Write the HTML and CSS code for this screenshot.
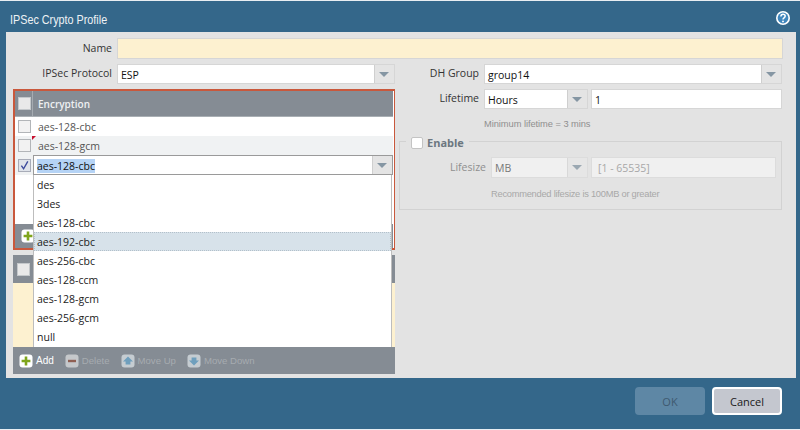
FILE: index.html
```html
<!DOCTYPE html>
<html lang="en">
<head>
<meta charset="utf-8">
<title>IPSec Crypto Profile</title>
<link rel="stylesheet" href="styles.css">
</head>
<body>
<div class="dialog">
  <header class="titlebar">
    <h1 class="title">IPSec Crypto Profile</h1>
    <svg class="help" viewBox="0 0 16 16" aria-label="Help"><circle cx="8" cy="8" r="7" fill="#fff"/><circle cx="8" cy="8" r="5.4" fill="#3f86bd"/><path d="M5.9 6.4c0-3 4.3-2.9 4.3-.3 0 1.7-2.2 1.7-2.2 3.3" fill="none" stroke="#fff" stroke-width="1.5"/><circle cx="8" cy="11.4" r=".95" fill="#fff"/></svg>
  </header>

  <main class="panel">
    <div class="name-row">
      <label class="label">Name</label>
      <div class="input required"></div>
    </div>

    <div class="columns">
      <section class="left">
        <div class="field-row">
          <label class="label">IPSec Protocol</label>
          <div class="select grow"><span class="value">ESP</span><span class="arrow"></span></div>
        </div>

        <div class="grid encryption">
          <div class="grid-head">
            <span class="check-cell"><span class="check head-check"></span></span>
            <span class="head-title">Encryption</span>
          </div>
          <div class="row"><span class="check-cell"><span class="check"></span></span><span class="cell">aes-128-cbc</span></div>
          <div class="row alt"><span class="check-cell"><span class="check"></span></span><span class="cell">aes-128-gcm</span><span class="dirty"></span></div>
          <div class="row edit">
            <span class="check-cell"><span class="check checked"><svg viewBox="0 0 12 12"><path d="M2.6 6.2 5 9.6 9.6 1.6" fill="none" stroke="#3b4a9c" stroke-width="1.5"/></svg></span></span>
            <div class="select editor"><span class="value"><span class="selection">aes-128-cbc</span></span><span class="arrow"></span></div>
          </div>
          <div class="grid-fill"></div>
          <div class="toolbar short">
            <svg class="tool" viewBox="0 0 14 14"><rect x=".5" y=".5" width="13" height="13" rx="3" fill="#fff"/><path d="M7 2.6v8.8M2.6 7h8.8" stroke="#7fa51c" stroke-width="2.6"/></svg>
          </div>
        </div>

        <div class="grid auth">
          <div class="grid-head tall"><span class="check-cell"><span class="check head-check"></span></span></div>
          <div class="grid-body"></div>
          <div class="toolbar">
            <span class="tool-item"><svg class="tool" viewBox="0 0 14 14"><rect x=".5" y=".5" width="13" height="13" rx="3" fill="#fff"/><path d="M7 2.6v8.8M2.6 7h8.8" stroke="#7fa51c" stroke-width="2.6"/></svg><span class="tool-label on">Add</span></span>
            <span class="tool-item"><svg class="tool" viewBox="0 0 14 14"><rect x=".5" y=".5" width="13" height="13" rx="3" fill="#c5c8cb"/><path d="M3 7h8" stroke="#8f5f52" stroke-width="2.4"/></svg><span class="tool-label">Delete</span></span>
            <span class="tool-item"><svg class="tool" viewBox="0 0 14 14"><rect x=".5" y=".5" width="13" height="13" rx="3" fill="#c5ccd1"/><path d="M7 2.6 12 7.6H9.4v3H4.6v-3H2z" fill="#6f9fbd"/></svg><span class="tool-label">Move Up</span></span>
            <span class="tool-item"><svg class="tool" viewBox="0 0 14 14"><rect x=".5" y=".5" width="13" height="13" rx="3" fill="#c5ccd1"/><path d="M7 11.4 12 6.4H9.4v-3H4.6v3H2z" fill="#6f9fbd"/></svg><span class="tool-label">Move Down</span></span>
          </div>
        </div>

        <ul class="dropdown">
          <li>des</li>
          <li>3des</li>
          <li>aes-128-cbc</li>
          <li class="hover">aes-192-cbc</li>
          <li>aes-256-cbc</li>
          <li>aes-128-ccm</li>
          <li>aes-128-gcm</li>
          <li>aes-256-gcm</li>
          <li>null</li>
        </ul>
      </section>

      <section class="right">
        <div class="field-row">
          <label class="label short-label">DH Group</label>
          <div class="select grow"><span class="value">group14</span><span class="arrow"></span></div>
        </div>
        <div class="field-row">
          <label class="label short-label">Lifetime</label>
          <div class="select unit"><span class="value">Hours</span><span class="arrow"></span></div>
          <div class="input number">1</div>
        </div>
        <p class="hint life-hint">Minimum lifetime = 3 mins</p>

        <div class="fieldset">
          <div class="legend"><span class="check legend-check"></span><span class="legend-text">Enable</span></div>
          <div class="field-row">
            <label class="label size-label">Lifesize</label>
            <div class="select unit size-unit disabled"><span class="value">MB</span><span class="arrow"></span></div>
            <div class="input number disabled placeholder">[1 - 65535]</div>
          </div>
          <p class="hint size-hint">Recommended lifesize is 100MB or greater</p>
        </div>
      </section>
    </div>
  </main>

  <footer class="actions">
    <button class="btn ok" type="button">OK</button>
    <button class="btn cancel" type="button">Cancel</button>
  </footer>
</div>
</body>
</html>
```

FILE: styles.css
```css
* { box-sizing: border-box; }
html, body { margin: 0; padding: 0; }
body {
  width: 800px;
  height: 430px;
  overflow: hidden;
  background: #e8eef2;
  font-family: "Open Sans", "Liberation Sans", sans-serif;
  font-size: 10.5px;
  color: #222;
}
.dialog { display: flex; flex-direction: column; height: 429px; border-top: 1px solid #e8eef2; background: #34678a; }

.titlebar { height: 31px; display: flex; align-items: center; justify-content: space-between; padding: 0 9px 0 10px; }
.title { margin: 0; font-family: "Liberation Sans", Arial, sans-serif; font-size: 13px; font-weight: 400; color: #eef2f5; position: relative; top: 3px; transform: scaleX(.83); transform-origin: left center; }
.help { width: 16px; height: 16px; position: relative; top: 1px; }

.panel { width: 790px; height: 346px; margin-left: 6px; background: #e3e3e3; padding: 6px 13px 0 7px; }
.name-row { display: flex; gap: 5px; height: 21px; }
.label { width: 99px; text-align: right; color: #333; line-height: 21px; flex: none; }
.field-row .label { line-height: 19px; }
.input { background: #fff; border: 1px solid #d6d6d6; line-height: 20px; padding-left: 3px; }
.required { flex: 1; background: #fdf1d0; }

.columns { display: flex; gap: 4px; margin-top: 5px; }
.left { width: 382px; position: relative; }
.right { width: 383px; }
.field-row { display: flex; gap: 5px; height: 20px; margin-bottom: 5px; }
.field-row .short-label { width: 80px; }

.select { display: flex; background: #fff; border: 1px solid #d6d6d6; height: 20px; }
.grow { flex: 1; }
.value { flex: 1; line-height: 20px; padding-left: 3px; color: #111; }
.arrow { width: 20px; flex: none; background: #e4e4e4; border-left: 1px solid #cfcfcf; position: relative; }
.arrow::after { content: ""; position: absolute; left: 4px; top: 7px; border: 5px solid transparent; border-top: 5px solid #8596a3; border-bottom: 0; }

.grid { width: 382px; }
.encryption { height: 161px; border: 2px solid #c9583c; border-width: 2px 1px 2px 2px; display: flex; flex-direction: column; background: #fff; padding-right: 1px; }
.grid-head { display: flex; height: 26px; background: #858c94; border-bottom: 1px solid #a9afb4; }
.check-cell { width: 18px; flex: none; display: flex; align-items: center; justify-content: center; }
.grid-head .check-cell { border-right: 1px solid #a5abb1; padding-left: 1px; }
.head-title { padding-left: 5px; line-height: 26px; color: #eef0f2; font-weight: 600; font-size: 10px; }
.check { width: 13px; height: 13px; display: block; border: 1px solid #b2b5b8; background: #f2f2f2; }
.head-check { background: #e9e9e9; border-color: #c4c8cb; width: 13px; height: 13px; }
.check svg { display: block; width: 11px; height: 11px; }
.checked { background: #dfe3ea; border-color: #a8acb8; }

.row { display: flex; height: 19px; position: relative; background: #fff; align-items: center; }
.row.alt { background: #f0f2f3; }
.cell { padding-left: 5px; color: #555; }
.dirty { position: absolute; left: 17px; top: 0; border-top: 4px solid #c8102e; border-right: 4px solid transparent; width: 0; height: 0; }
.row.edit { height: 20px; background: #f0f2f3; }
.editor { flex: 1; border-color: #9a9a9a; }
.editor .value { line-height: 21px; }
.selection { background: #b5d3f5; }
.grid-fill { flex: 1; background: #fff; }

.toolbar { background: #858c94; display: flex; align-items: center; padding-left: 6px; }
.toolbar.short { height: 24px; flex: none; }
.tool { width: 14px; height: 14px; flex: none; display: block; }

.auth { margin-top: 5px; height: 119px; display: flex; flex-direction: column; }
.grid-head.tall { height: 28px; border-bottom: 0; background: #858c94; }
.grid-head.tall .check-cell { width: 20px; border-right: 0; }
.grid-body { flex: 1; background: #fdf1d0; }
.auth .toolbar { height: 27px; gap: 11px; }
.tool-item { display: flex; align-items: center; gap: 3px; }
.tool-label { color: #a5abb0; font-family: "Liberation Sans", Arial, sans-serif; font-size: 9.6px; }
.tool-label.on { color: #fff; font-size: 10px; }

.dropdown { position: absolute; top: 111px; left: 20px; width: 359px; height: 172px; margin: 0; padding: 0; list-style: none; background: #fff; border: 1px solid #bdbdbd; border-top: 0; border-bottom: 0; }
.dropdown li { height: 19px; line-height: 21px; padding-left: 3px; color: #222; }
.dropdown li.hover { background: #d7e2ea; outline: 1px dotted #b3c0ca; outline-offset: -1px; }

.unit { width: 104px; flex: none; }
.number { flex: 1; height: 20px; margin-left: -2px; color: #111; }
.hint { color: #8f8f8f; font-family: "Liberation Sans", Arial, sans-serif; font-size: 9.3px; line-height: 14px; }
.life-hint { margin: 0 0 0 85px; height: 22px; padding-top: 3px; letter-spacing: -0.05px; }

.fieldset { position: relative; height: 69px; margin-top: 5px; border: 1px solid #d2d2d2; padding: 15px 5px 0 0; }
.legend { position: absolute; top: -6px; left: 6px; display: flex; align-items: center; gap: 4px; background: #e3e3e3; padding: 0 5px; height: 13px; }
.legend-check { width: 12px; height: 12px; background: #fff; border-color: #c4c4c4; border-radius: 2px; }
.legend-text { font-weight: 700; color: #6c7780; font-size: 11px; }
.fieldset .field-row { margin-bottom: 0; height: 21px; }
.fieldset .size-label { width: 86px; color: #8f8f8f; line-height: 21px; }
.size-unit { width: 97px; height: 21px; }
.disabled { background: #f0f0f0; border-color: #dcdcdc; }
.disabled .value { color: #777; }
.disabled .arrow { background: #e6e6e6; border-left-color: #d8d8d8; }
.disabled .arrow::after { border-top-color: #9ba8b2; }
.placeholder { color: #a8a8a8; height: 21px; padding-left: 6px; }
.size-hint { margin: 0 0 0 91px; padding-top: 9px; color: #a8a8a8; letter-spacing: -0.25px; }

.actions { flex: 1; display: flex; justify-content: flex-end; gap: 7px; padding: 9px 18px 0 0; }
.btn { width: 70px; height: 28px; border-radius: 4px; font: inherit; font-size: 11px; }
.ok { background: #5e87a5; color: #3e5a70; border: 0; }
.cancel { background: #c4c7cf; border: 2px solid #fff; color: #1a1a1a; }
```
